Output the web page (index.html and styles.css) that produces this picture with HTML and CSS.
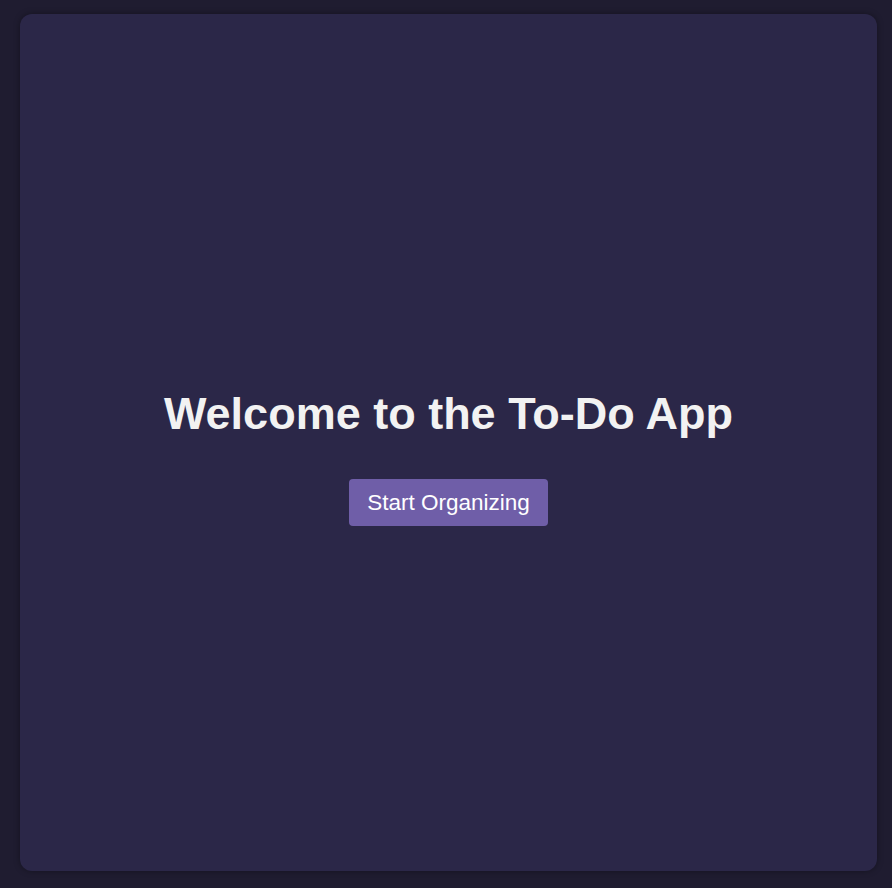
FILE: index.html
```html
<!DOCTYPE html>
<html lang="en">
<head>
<meta charset="utf-8">
<title>To-Do App</title>
<link rel="stylesheet" href="styles.css">
</head>
<body>
<main class="card">
  <div class="welcome">
    <h1 class="title">Welcome to the To-Do App</h1>
    <button class="start-btn" type="button">Start Organizing</button>
  </div>
</main>
</body>
</html>
```

FILE: styles.css
```css
html, body {
  margin: 0;
  height: 100%;
}
body {
  background: #1f1c30;
  font-family: "Liberation Sans", Arial, sans-serif;
  padding: 14px 15px 17px 20px;
  box-sizing: border-box;
  display: flex;
}
.card {
  flex: 1;
  background: #2b2748;
  border-radius: 12px;
  box-shadow: 0 0 6px rgba(0, 0, 0, 0.35);
  display: flex;
  align-items: center;
  justify-content: center;
}
.welcome {
  display: flex;
  flex-direction: column;
  align-items: center;
  padding-top: 29px;
}
.title {
  margin: 0 0 39px;
  font-size: 45px;
  font-weight: 700;
  color: #f2f2f2;
  line-height: 52px;
}
.start-btn {
  background: #6f5ea8;
  color: #ffffff;
  border: none;
  border-radius: 4px;
  font-family: "Liberation Sans", Arial, sans-serif;
  font-size: 22.5px;
  line-height: 26px;
  padding: 10.5px 18px;
  cursor: pointer;
}
```
